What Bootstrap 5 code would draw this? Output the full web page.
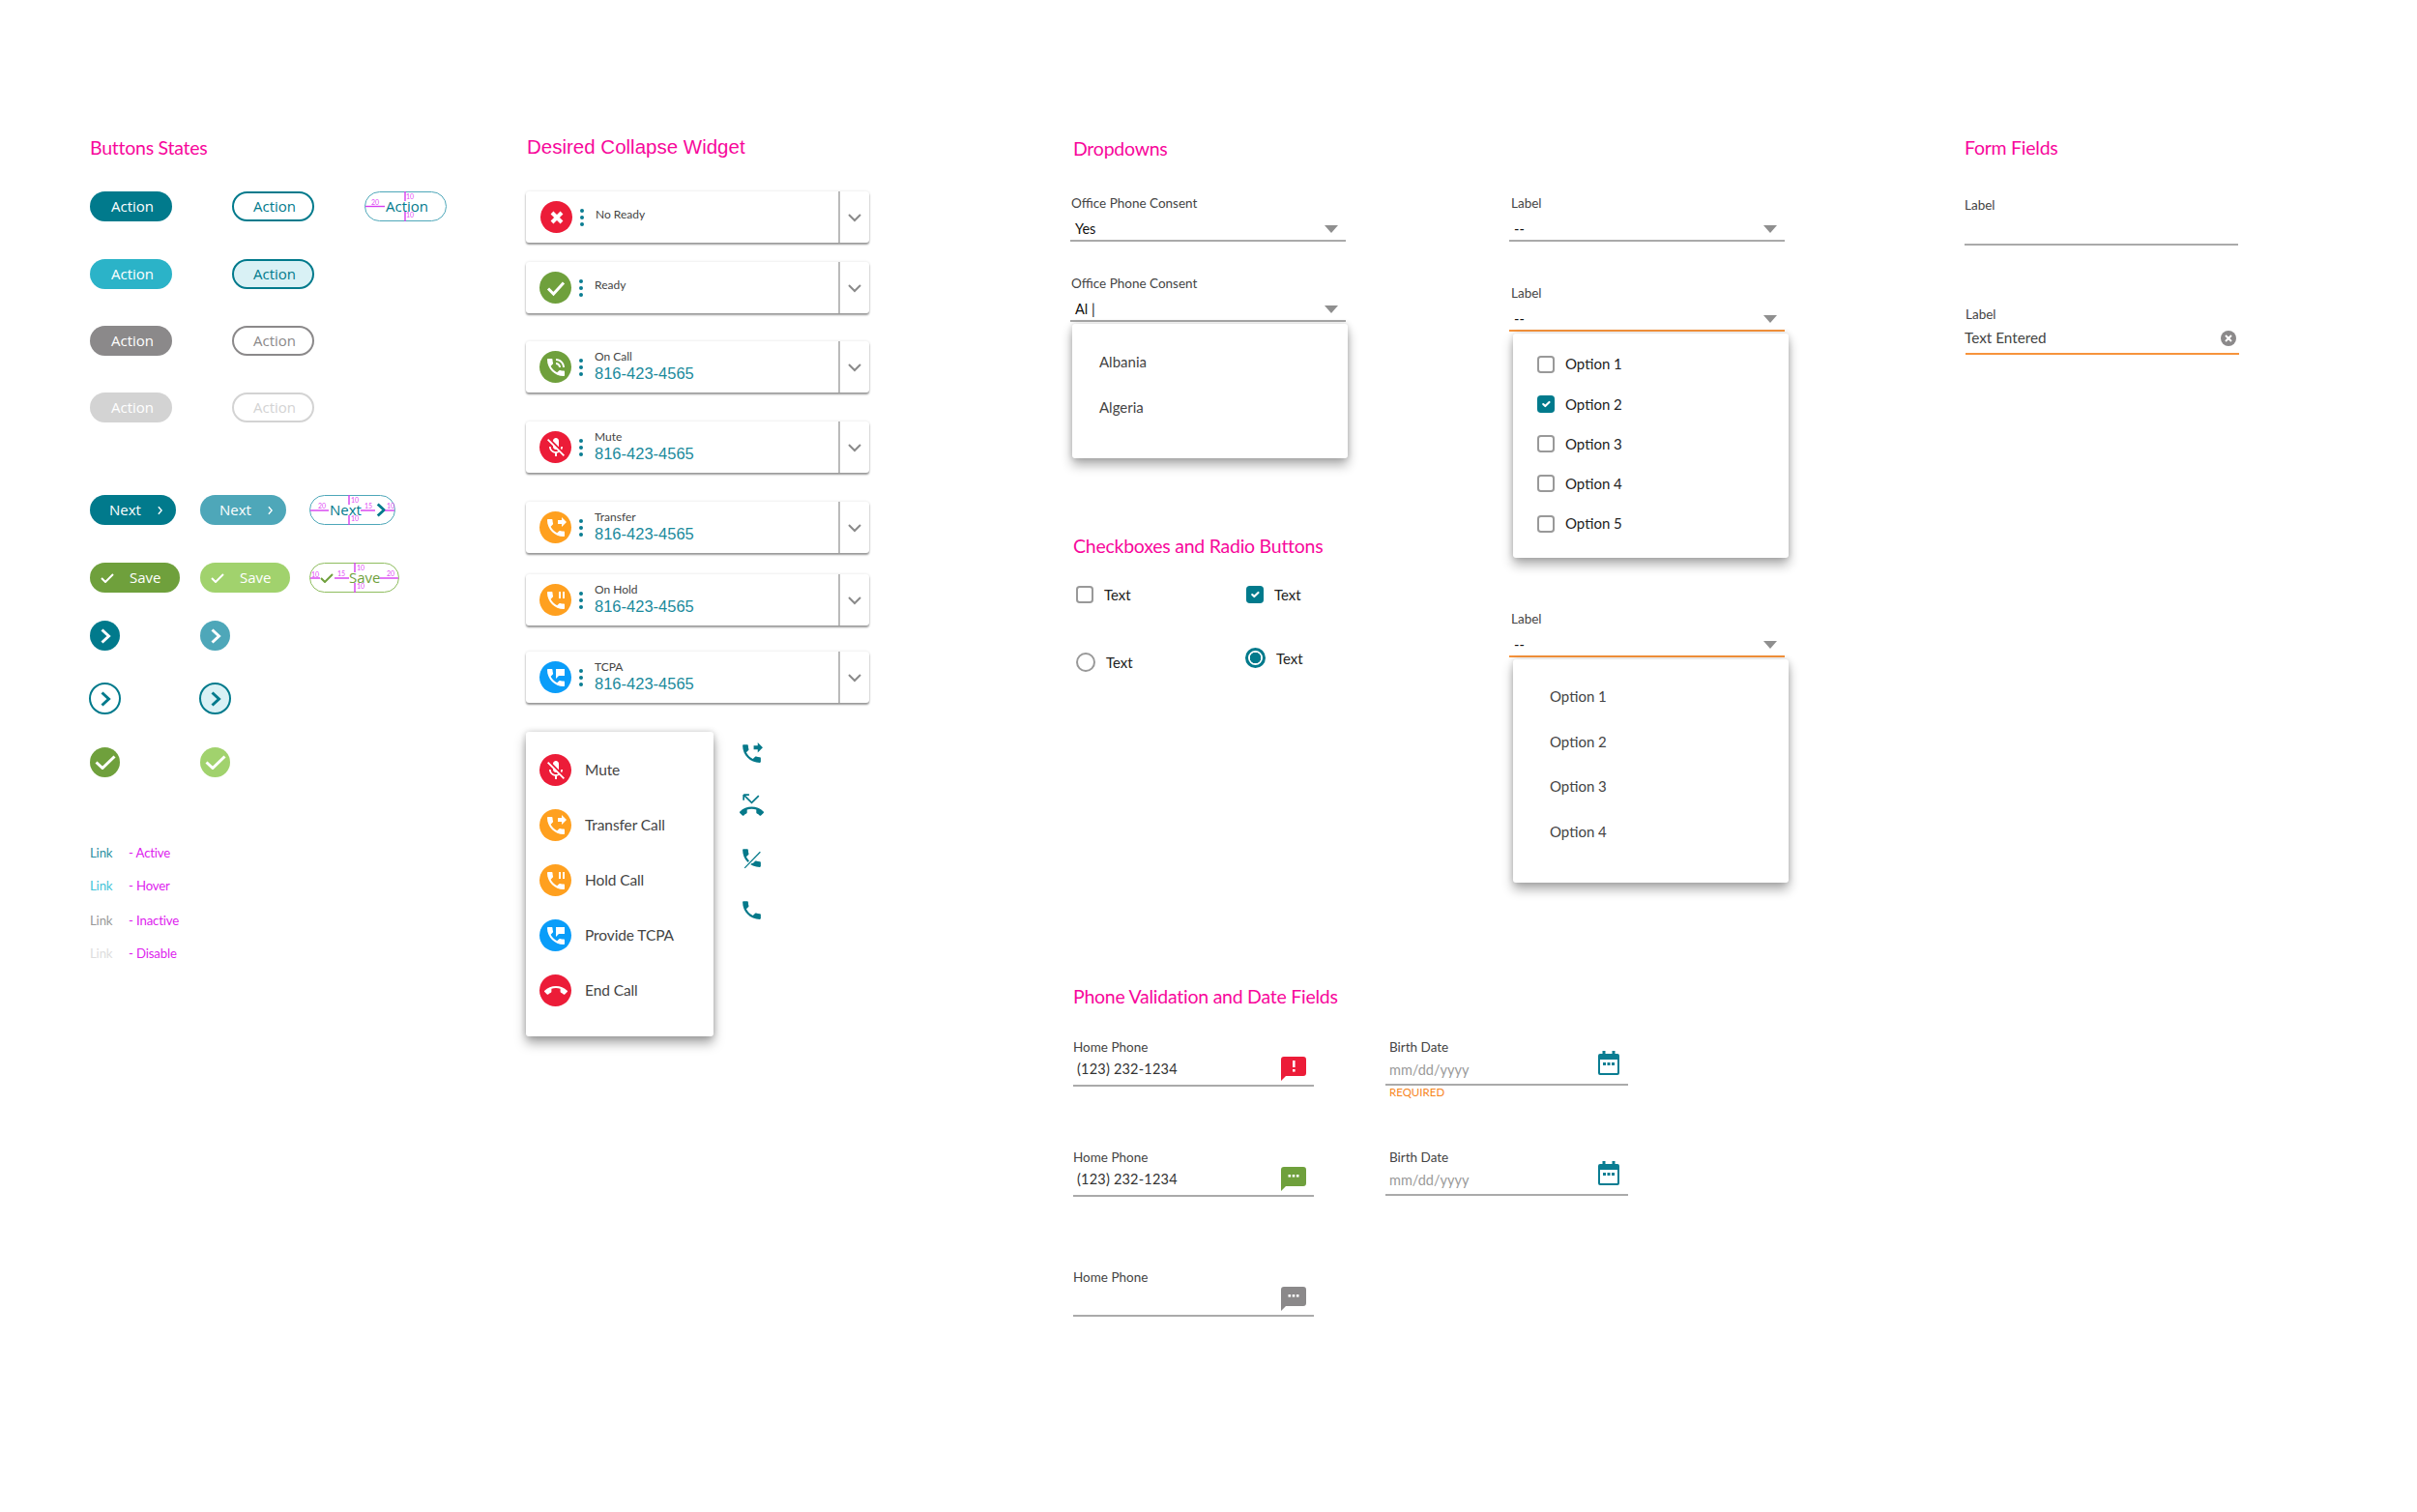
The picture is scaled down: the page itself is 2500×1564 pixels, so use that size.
<!DOCTYPE html>
<html lang="en">
<head>
<meta charset="utf-8">
<title>UI Kit</title>
<link rel="stylesheet" href="https://cdn.jsdelivr.net/npm/bootstrap@5.3.0/dist/css/bootstrap.min.css">
<style>
:root{--teal:#017a8c;--teal2:#4ea7b9;--hov:#2bb3c8;--pale:#d9f1f5;--grn:#6fa03c;--grn2:#a1d26d;--gry:#8b898a;--dis:#d3d3d3;--red:#ec1c38;--org:#ffa01f;--blu:#0a9df9;--focus:#f7943c;--ink:#444}
body{background:#fff;font-family:"Lato","Liberation Sans",sans-serif;color:var(--ink)}
.sheet{padding:139px 0 0 93px}
.c1{width:451px}.c2{width:563px}.c3{width:454px}.c4{width:471px}.c34{width:925px}
.ttl{height:28px;line-height:28px;font-size:19.5px;color:#f7079b;letter-spacing:-.25px;margin:0;font-weight:400}
.ttl-arial{font-family:"Liberation Sans",sans-serif;font-size:20.5px;letter-spacing:0}

/* buttons */
.g-act{display:grid;grid-template-columns:147px 137px 85px}
.g-next{display:grid;grid-template-columns:114px 113px 93px}
.pb{position:relative;display:flex;align-items:center;height:31px;width:85px;padding:0 0 0 20px;border:2px solid transparent;border-radius:50rem;font:500 15px/1 "Open Sans","Liberation Sans",sans-serif;color:#fff;text-align:left}
.pb-teal{background:var(--teal);color:#fff}
.pb-hov{background:var(--hov);color:#fff}
.pb-gry{background:var(--gry);color:#fff}
.pb-dis{background:var(--dis);color:#fff}
.pb-l{background:#fff;border-color:var(--teal);color:var(--teal)}
.pb-lh{background:var(--pale);border-color:var(--teal);color:var(--teal)}
.pb-lg{background:#fff;border-color:var(--gry);color:var(--gry)}
.pb-ld{background:#fff;border-color:var(--dis);color:var(--dis)}
.pb-spec{border-width:1px;padding-left:21px;background:#fff;border-color:var(--teal2);color:var(--teal)}
.pb-spec-g{border-color:#8fbd5f;color:var(--grn)}
.pb-next{width:89px;padding-left:18px}
.pb-next.pb-spec{padding-left:20px}
.pb-next .nx-s{margin-left:17px}
.pb-save{width:93px;padding-left:9px}
.pb-teal2{background:var(--teal2);color:#fff}
.pb-grn{background:var(--grn);color:#fff}
.pb-grn2{background:var(--grn2);color:#fff}
.nx-s{width:5px;height:10px;flex:none}
.nx-b{width:10px;height:15px;margin-left:15px;flex:none}
.ck-s{width:14px;height:10px;margin-right:16px;flex:none}
.pb-save.pb-spec{padding-left:10px}
.spec-svg{position:absolute;left:-1px;top:-1px;pointer-events:none}
.spec-svg line{stroke:#d63df0;stroke-width:1.4}
.spec-svg text{font:7px "Lato",sans-serif;fill:#e24cf5;text-anchor:middle}
.g-circ{display:grid;grid-template-columns:114px 33px}
.cb{width:31px;height:31px;display:flex;align-items:center;justify-content:center;border-radius:50%;padding:0;color:#fff;border:0}
.cb-o{width:33px;height:33px;margin-left:-1px;border:2px solid var(--teal);color:var(--teal);background:#fff}
.cb-oh{background:var(--pale)}
.cb-teal{background:var(--teal)}.cb-teal2{background:var(--teal2)}.cb-grn{background:var(--grn)}.cb-grn2{background:var(--grn2)}
.cb svg.cv{width:12px;height:16px}
.cb svg.ckb{width:22px;height:15px}
.lnk{display:flex;height:20px;line-height:20px;font-size:13.2px;letter-spacing:-.15px}
.lnk a{width:40px;text-decoration:none}
.lnk span{color:#dd22ee}
.lk-a{color:#2a8fa1}.lk-h{color:#45c4d8}.lk-i{color:#999}.lk-d{color:#ddd}

/* call widgets */
.call{flex-direction:row;align-items:stretch;width:355px;height:53px;border:0;border-radius:3px;box-shadow:0 2px 2px rgba(0,0,0,.38),0 0 3px rgba(0,0,0,.12)}
.call-m{flex:1;display:flex;align-items:center;padding-left:14px}
.call-x{width:32px;border-left:2px solid #bbb;display:flex;align-items:center;justify-content:center;padding-top:2px}
.call-x svg{width:14px;height:9px}
.st{width:33px;height:33px;flex:none;border-radius:50%;display:flex;align-items:center;justify-content:center;color:#fff}
.st svg{width:24px;height:24px;fill:currentColor}
.st-r{background:var(--red)}.st-g{background:var(--grn)}.st-o{background:var(--org)}.st-b{background:var(--blu)}
.dots{width:4px;height:18px;margin:0 12px 0 8px;flex:none}
.call-t{display:flex;flex-direction:column;margin-bottom:2px}
.call-l{font-size:12px;line-height:15px;color:var(--ink)}
.call-n{font:16.5px/20px "Liberation Sans",sans-serif;color:#1a8a9c}
.call-up{margin-bottom:6px}
.below{display:flex;align-items:flex-start}
.mnu{width:194px;height:315px;margin:0;padding:23px 0 0 14px;border:0;border-radius:3px;list-style:none;box-shadow:0 7px 12px rgba(0,0,0,.35),0 0 6px rgba(0,0,0,.18);display:flex;flex-direction:column;gap:24px;background:#fff}
.mnu li{display:flex;align-items:center;gap:14px;font-size:15.5px;color:var(--ink);letter-spacing:-.1px}
.side{margin:10px 0 0 27px;display:flex;flex-direction:column;gap:29px;color:#05798a}
.side svg{width:25px;height:25px;display:block;fill:currentColor}

/* fields */
.lab{height:18px;line-height:18px;font-size:13.5px;color:var(--ink);display:block;margin:0}
.fld{display:flex;align-items:center;justify-content:space-between;height:31px;padding:7px 8px 0 5px;border-bottom:2px solid #aaa;font-size:14.5px;color:#111;width:285px}
.fld-f{border-bottom-color:var(--focus)}
.tri{width:0;height:0;border:7px solid transparent;border-top:8px solid #8f8f8f;border-bottom:0;flex:none}
.lab-i{padding-left:1px}
.dd{position:static;display:block;width:285px;margin:0;padding:16px 0 29px;border:0;border-radius:3px;box-shadow:0 7px 12px rgba(0,0,0,.32),0 0 6px rgba(0,0,0,.16);font-size:15px;background:#fff}
.dd-c{height:139px}
.dd-it{display:block;height:47px;line-height:47px;padding:0 0 0 28px;color:var(--ink);font-size:15px;background:transparent}
.dd-o{padding:15px 0 29px;height:231px}
.dd-o .dd-it{height:46.67px;line-height:46.67px;padding-left:38px}
.dd-k{height:232px;padding:11px 0 14px 25px}
.dd-k .ck-l{height:41.25px}
.ck-l{display:flex;align-items:center;gap:11px;font-size:15px;color:#222}
.fci{width:18px;height:18px;margin:0;flex:none;border:2px solid #999;border-radius:2px;background-color:#fff}
.fci:checked{background-color:var(--teal);border-color:var(--teal)}
.fci[type=radio]{width:20px;height:20px;border-radius:50%}
.fci[type=radio]:checked{width:21px;height:21px;background-color:#fff;background-image:radial-gradient(circle,var(--teal) 0 5.5px,#fff 6px);border:3px solid var(--teal)}
.g-chk{display:grid;grid-template-columns:176px 100px;padding-left:6px}
.rad-up{margin-top:-8px;margin-left:-1px}
.pv-row{display:flex;align-items:flex-start}
.pv-a{width:323px}
.pv-b{width:253px}
.pv-f{display:flex;align-items:center;justify-content:space-between;height:32px;width:249px;padding:0 8px 3px 4px;border-bottom:2px solid #aaa;color:#333;font-size:14.5px;letter-spacing:.2px}
.pv-f svg{width:26px;height:25px;flex:none}
.pv-d{display:flex;align-items:center;justify-content:space-between;width:251px;height:31px;padding:0 9px 0 4px;border-bottom:2px solid #aaa;color:#9a9a9a;font-size:14.5px}
.pv-d svg{width:22px;height:25px;flex:none;margin-top:-15px}
.req{font-size:11.5px;line-height:12px;color:#f7861e;padding:1px 0 0 4px;margin:0}
.lab-d{padding-left:4px}
.ff{width:283px;height:33px;border-bottom:2px solid #aaa;padding:0 3px 0 0;display:flex;align-items:center;justify-content:space-between;font-size:15.3px;color:var(--ink)}
.ff svg{width:16px;height:16px}
.ff-f{border-bottom-color:var(--focus);margin-left:1px}
.ff-f span{margin-left:-1px}

/* flow spacing */
.t-1{margin-top:-1px}.t1{margin-top:1px}.t2{margin-top:2px}.t14{margin-top:14px}.t16{margin-top:16px}.t20{margin-top:20px}.t22{margin-top:22px}.t25{margin-top:25px}.t27{margin-top:27px}.t29{margin-top:29px}.t30{margin-top:30px}.t31{margin-top:31px}.t32{margin-top:32px}.t33{margin-top:33px}.t34{margin-top:34px}.t36{margin-top:36px}.t38{margin-top:38px}.t39{margin-top:39px}.t44{margin-top:44px}.t47{margin-top:47px}.t52{margin-top:52px}.t54{margin-top:54px}.t62{margin-top:62px}.t68{margin-top:68px}.t74{margin-top:74px}.t75{margin-top:75px}.t77{margin-top:77px}.t104{margin-top:104px}
.x1{margin-left:1px}.x2{margin-left:2px}.x3{margin-left:3px}.x4{margin-left:4px}
</style>
</head>
<body>
<svg class="d-none" xmlns="http://www.w3.org/2000/svg">
  <symbol id="i-call" viewBox="0 0 24 24"><path d="M6.62 10.79c1.44 2.83 3.76 5.14 6.59 6.59l2.2-2.2c.27-.27.67-.36 1.02-.24 1.12.37 2.33.57 3.57.57.55 0 1 .45 1 1V20c0 .55-.45 1-1 1-9.39 0-17-7.61-17-17 0-.55.45-1 1-1h3.5c.55 0 1 .45 1 1 0 1.25.2 2.45.57 3.57.11.35.03.74-.25 1.02l-2.2 2.2z"/></symbol>
  <symbol id="i-talk" viewBox="0 0 24 24"><path d="M20 15.5c-1.25 0-2.45-.2-3.57-.57-.35-.11-.74-.03-1.02.24l-2.2 2.2c-2.83-1.44-5.15-3.75-6.59-6.59l2.2-2.21c.28-.26.36-.65.25-1C8.7 6.45 8.5 5.25 8.5 4c0-.55-.45-1-1-1H4c-.55 0-1 .45-1 1 0 9.39 7.61 17 17 17 .55 0 1-.45 1-1v-3.5c0-.55-.45-1-1-1zM19 12h2c0-4.97-4.03-9-9-9v2c3.87 0 7 3.13 7 7zm-4 0h2c0-2.76-2.24-5-5-5v2c1.66 0 3 1.34 3 3z"/></symbol>
  <symbol id="i-fwd" viewBox="0 0 24 24"><path d="M18 11l5-5-5-5v3h-4v4h4v3zm2 4.5c-1.25 0-2.45-.2-3.57-.57-.35-.11-.74-.03-1.02.24l-2.2 2.2c-2.83-1.44-5.15-3.75-6.59-6.59l2.2-2.21c.28-.26.36-.65.25-1C8.7 6.45 8.5 5.25 8.5 4c0-.55-.45-1-1-1H4c-.55 0-1 .45-1 1 0 9.39 7.61 17 17 17 .55 0 1-.45 1-1v-3.5c0-.55-.45-1-1-1z"/></symbol>
  <symbol id="i-hold" viewBox="0 0 24 24"><path d="M17 3h-2v7h2V3zm3 12.5c-1.25 0-2.45-.2-3.57-.57-.35-.11-.74-.03-1.02.24l-2.2 2.2c-2.83-1.44-5.15-3.75-6.59-6.59l2.2-2.21c.28-.26.36-.65.25-1C8.7 6.45 8.5 5.25 8.5 4c0-.55-.45-1-1-1H4c-.55 0-1 .45-1 1 0 9.39 7.61 17 17 17 .55 0 1-.45 1-1v-3.5c0-.55-.45-1-1-1zM19 3v7h2V3h-2z"/></symbol>
  <symbol id="i-tcpa" viewBox="0 0 24 24"><path d="M20 15.5c-1.25 0-2.45-.2-3.57-.57-.35-.11-.74-.03-1.02.24l-2.2 2.2c-2.83-1.44-5.15-3.75-6.59-6.59l2.2-2.21c.28-.26.36-.65.25-1C8.7 6.45 8.5 5.25 8.5 4c0-.55-.45-1-1-1H4c-.55 0-1 .45-1 1 0 9.39 7.61 17 17 17 .55 0 1-.45 1-1v-3.5c0-.55-.45-1-1-1zM12 3h9v7h-6l-3 3z"/></symbol>
  <symbol id="i-mute" viewBox="0 0 24 24"><path d="M19 11h-1.7c0 .74-.16 1.43-.43 2.05l1.23 1.23c.56-.98.9-2.09.9-3.28zm-4.02.17c0-.06.02-.11.02-.17V5c0-1.66-1.34-3-3-3S9 3.34 9 5v.18l5.98 5.99zM4.27 3L3 4.27l6.01 6.01V11c0 1.66 1.33 3 2.99 3 .22 0 .44-.03.65-.08l1.66 1.66c-.71.33-1.5.52-2.31.52-2.76 0-5.3-2.1-5.3-5.1H5c0 3.41 2.72 6.23 6 6.72V21h2v-3.28c.91-.13 1.77-.45 2.54-.9L19.73 21 21 19.73 4.27 3z"/></symbol>
  <symbol id="i-end" viewBox="0 0 24 24"><path d="M12 9c-1.6 0-3.15.25-4.6.72v3.1c0 .39-.23.74-.56.9-.98.49-1.87 1.12-2.66 1.85-.18.18-.43.28-.7.28-.28 0-.53-.11-.71-.29L.29 13.08c-.18-.17-.29-.42-.29-.7 0-.28.11-.53.29-.71C3.34 8.78 7.46 7 12 7s8.66 1.78 11.71 4.67c.18.18.29.43.29.71 0 .28-.11.53-.29.71l-2.48 2.48c-.18.18-.43.29-.71.29-.27 0-.52-.11-.7-.28-.79-.74-1.69-1.36-2.67-1.85-.33-.16-.56-.5-.56-.9v-3.1C15.15 9.25 13.6 9 12 9z"/></symbol>
  <symbol id="i-cv" viewBox="0 0 10 16"><path d="M1.500 1.500l7 6.500-7 6.500" fill="none" stroke="currentColor" stroke-width="3"/></symbol>
  <symbol id="i-cvs" viewBox="0 0 6 11"><path d="M1 1l4 4.500-4 4.500" fill="none" stroke="currentColor" stroke-width="1.600"/></symbol>
  <symbol id="i-ck" viewBox="0 0 14 10"><path d="M1 5l4 4 8-8" fill="none" stroke="currentColor" stroke-width="2"/></symbol>
  <symbol id="i-ckb" viewBox="0 0 22 15"><path d="M1.500 7.500L8 13.500 20.500 1.500" fill="none" stroke="currentColor" stroke-width="3"/></symbol>
  <symbol id="i-dn" viewBox="0 0 14 9"><path d="M1 1l6 6 6-6" fill="none" stroke="#8a8a8a" stroke-width="2"/></symbol>
  <symbol id="i-dots" viewBox="0 0 4 18"><circle cx="2" cy="2" r="2" fill="#0a7d92"/><circle cx="2" cy="9" r="2" fill="#0a7d92"/><circle cx="2" cy="16" r="2" fill="#0a7d92"/></symbol>
  <symbol id="i-bub" viewBox="0 0 26 25"><path d="M3 0h20a3 3 0 0 1 3 3v14a3 3 0 0 1-3 3H5l-5 5V3a3 3 0 0 1 3-3z"/></symbol>
  <symbol id="i-cal" viewBox="0 0 22 25"><path fill="#0a7d92" d="M4.500 0h3v3h7V0h3v3H20a2 2 0 0 1 2 2v18a2 2 0 0 1-2 2H2a2 2 0 0 1-2-2V5a2 2 0 0 1 2-2h2.500zM2 9v13.500c0 .3.2.5.500.5h17c.3 0 .5-.2.500-.5V9z"/><rect x="5" y="12" width="3" height="3" fill="#0a7d92"/><rect x="9.500" y="12" width="3" height="3" fill="#0a7d92"/><rect x="14" y="12" width="3" height="3" fill="#0a7d92"/></symbol>
</svg>

<main class="sheet d-flex align-items-start">

  <section class="c1">
    <h2 class="ttl">Buttons States</h2>
    <div class="g-act t31">
      <button class="btn pb pb-teal">Action</button>
      <button class="btn pb pb-l">Action</button>
      <button class="btn pb pb-spec">Action
        <svg class="spec-svg" width="85" height="31"><line x1="1" y1="15.500" x2="21" y2="15.500"/><line x1="42" y1="0" x2="42" y2="10"/><line x1="42" y1="21" x2="42" y2="31"/><text x="11" y="14">20</text><text x="47" y="7.500">10</text><text x="47" y="27">10</text></svg>
      </button>
    </div>
    <div class="g-act t39">
      <button class="btn pb pb-hov">Action</button>
      <button class="btn pb pb-lh">Action</button>
    </div>
    <div class="g-act t38">
      <button class="btn pb pb-gry">Action</button>
      <button class="btn pb pb-lg">Action</button>
    </div>
    <div class="g-act t38">
      <button class="btn pb pb-dis">Action</button>
      <button class="btn pb pb-ld">Action</button>
    </div>

    <div class="g-next t75">
      <button class="btn pb pb-next pb-teal">Next <svg class="nx-s"><use href="#i-cvs"/></svg></button>
      <button class="btn pb pb-next pb-teal2">Next <svg class="nx-s"><use href="#i-cvs"/></svg></button>
      <button class="btn pb pb-next pb-spec">Next<svg class="nx-b"><use href="#i-cv"/></svg>
        <svg class="spec-svg" width="89" height="31"><line x1="1" y1="16" x2="20" y2="16"/><line x1="53" y1="16" x2="68" y2="16"/><line x1="78" y1="16" x2="88" y2="16"/><line x1="41" y1="0" x2="41" y2="10"/><line x1="41" y1="21" x2="41" y2="31"/><text x="13" y="14">20</text><text x="61" y="14">15</text><text x="84" y="14">10</text><text x="47" y="7.500">10</text><text x="47" y="27">10</text></svg>
      </button>
    </div>
    <div class="g-next t39">
      <button class="btn pb pb-save pb-grn"><svg class="ck-s"><use href="#i-ck"/></svg>Save</button>
      <button class="btn pb pb-save pb-grn2"><svg class="ck-s"><use href="#i-ck"/></svg>Save</button>
      <button class="btn pb pb-save pb-spec pb-spec-g"><svg class="ck-s"><use href="#i-ck"/></svg>Save
        <svg class="spec-svg" width="93" height="31"><line x1="1" y1="16" x2="11" y2="16"/><line x1="26" y1="16" x2="41" y2="16"/><line x1="73" y1="16" x2="92" y2="16"/><line x1="47" y1="0" x2="47" y2="10"/><line x1="47" y1="21" x2="47" y2="31"/><text x="6" y="15">10</text><text x="33" y="14">15</text><text x="84" y="14">20</text><text x="53" y="7.500">10</text><text x="53" y="27">10</text></svg>
      </button>
    </div>

    <div class="g-circ t29">
      <button class="btn cb cb-teal"><svg class="cv"><use href="#i-cv"/></svg></button>
      <button class="btn cb cb-teal2"><svg class="cv"><use href="#i-cv"/></svg></button>
    </div>
    <div class="g-circ t33">
      <button class="btn cb cb-o"><svg class="cv"><use href="#i-cv"/></svg></button>
      <button class="btn cb cb-o cb-oh"><svg class="cv"><use href="#i-cv"/></svg></button>
    </div>
    <div class="g-circ t34">
      <button class="btn cb cb-grn"><svg class="ckb"><use href="#i-ckb"/></svg></button>
      <button class="btn cb cb-grn2"><svg class="ckb"><use href="#i-ckb"/></svg></button>
    </div>

    <div class="lnk t68"><a class="lk-a" href="#">Link</a><span>- Active</span></div>
    <div class="lnk t14"><a class="lk-h" href="#">Link</a><span>- Hover</span></div>
    <div class="lnk t16"><a class="lk-i" href="#">Link</a><span>- Inactive</span></div>
    <div class="lnk t14"><a class="lk-d" href="#">Link</a><span>- Disable</span></div>
  </section>

  <section class="c2">
    <h2 class="ttl ttl-arial t-1 x1">Desired Collapse Widget</h2>
    <div class="card call t32">
      <div class="call-m"><span class="st st-r x1"><svg viewBox="0 0 24 24"><path d="M7 7l10 10M17 7L7 17" fill="none" stroke="#fff" stroke-width="4"/></svg></span><svg class="dots"><use href="#i-dots"/></svg><div class="call-t call-up"><span class="call-l">No Ready</span></div></div>
      <div class="call-x"><svg><use href="#i-dn"/></svg></div>
    </div>
    <div class="card call t20">
      <div class="call-m"><span class="st st-g"><svg viewBox="0 0 24 24"><path d="M4 12.500l5.500 5.500L20 6.500" fill="none" stroke="#fff" stroke-width="3"/></svg></span><svg class="dots"><use href="#i-dots"/></svg><div class="call-t call-up"><span class="call-l">Ready</span></div></div>
      <div class="call-x"><svg><use href="#i-dn"/></svg></div>
    </div>
    <div class="card call t29">
      <div class="call-m"><span class="st st-g"><svg><use href="#i-talk"/></svg></span><svg class="dots"><use href="#i-dots"/></svg><div class="call-t"><span class="call-l">On Call</span><span class="call-n">816-423-4565</span></div></div>
      <div class="call-x"><svg><use href="#i-dn"/></svg></div>
    </div>
    <div class="card call t30">
      <div class="call-m"><span class="st st-r"><svg><use href="#i-mute"/></svg></span><svg class="dots"><use href="#i-dots"/></svg><div class="call-t"><span class="call-l">Mute</span><span class="call-n">816-423-4565</span></div></div>
      <div class="call-x"><svg><use href="#i-dn"/></svg></div>
    </div>
    <div class="card call t30">
      <div class="call-m"><span class="st st-o"><svg><use href="#i-fwd"/></svg></span><svg class="dots"><use href="#i-dots"/></svg><div class="call-t"><span class="call-l">Transfer</span><span class="call-n">816-423-4565</span></div></div>
      <div class="call-x"><svg><use href="#i-dn"/></svg></div>
    </div>
    <div class="card call t22">
      <div class="call-m"><span class="st st-o"><svg><use href="#i-hold"/></svg></span><svg class="dots"><use href="#i-dots"/></svg><div class="call-t"><span class="call-l">On Hold</span><span class="call-n">816-423-4565</span></div></div>
      <div class="call-x"><svg><use href="#i-dn"/></svg></div>
    </div>
    <div class="card call t27">
      <div class="call-m"><span class="st st-b"><svg><use href="#i-tcpa"/></svg></span><svg class="dots"><use href="#i-dots"/></svg><div class="call-t"><span class="call-l">TCPA</span><span class="call-n">816-423-4565</span></div></div>
      <div class="call-x"><svg><use href="#i-dn"/></svg></div>
    </div>

    <div class="below t30">
      <ul class="mnu card">
        <li><span class="st st-r"><svg><use href="#i-mute"/></svg></span>Mute</li>
        <li><span class="st st-o"><svg><use href="#i-fwd"/></svg></span>Transfer Call</li>
        <li><span class="st st-o"><svg><use href="#i-hold"/></svg></span>Hold Call</li>
        <li><span class="st st-b"><svg><use href="#i-tcpa"/></svg></span>Provide TCPA</li>
        <li><span class="st st-r"><svg><use href="#i-end"/></svg></span>End Call</li>
      </ul>
      <div class="side">
        <svg><use href="#i-fwd"/></svg>
        <svg viewBox="0 0 24 24"><g transform="translate(0 6)"><use href="#i-end" width="24" height="24"/></g><path d="M4 1v5.500M4 1h5.500M4.500 1.500L12 9l7-7" fill="none" stroke="currentColor" stroke-width="1.600"/></svg>
        <svg viewBox="0 0 24 24"><use href="#i-call" width="24" height="24"/><path d="M20.500 6L5 22" stroke="#fff" stroke-width="3.500"/><path d="M20.500 6L5 22" stroke="currentColor" stroke-width="1.200"/></svg>
        <svg><use href="#i-call"/></svg>
      </div>
    </div>
  </section>

  <div class="c34">
    <div class="d-flex align-items-start">
      <section class="c3">
        <h2 class="ttl t1 x3">Dropdowns</h2>
        <label class="lab t33 lab-i">Office Phone Consent</label>
        <div class="fld"><span>Yes</span><i class="tri"></i></div>
        <label class="lab t34 lab-i">Office Phone Consent</label>
        <div class="fld"><span>Al |</span><i class="tri"></i></div>
        <div class="dropdown-menu dd dd-c t2 x2">
          <a class="dropdown-item dd-it" href="#">Albania</a>
          <a class="dropdown-item dd-it" href="#">Algeria</a>
        </div>
        <h2 class="ttl t77 x3">Checkboxes and Radio Buttons</h2>
        <div class="g-chk t25">
          <label class="ck-l"><input class="form-check-input fci" type="checkbox">Text</label>
          <label class="ck-l"><input class="form-check-input fci" type="checkbox" checked>Text</label>
        </div>
        <div class="g-chk t47">
          <label class="ck-l"><input class="form-check-input fci" type="radio" name="r1">Text</label>
          <label class="ck-l rad-up"><input class="form-check-input fci" type="radio" name="r2" checked>Text</label>
        </div>
      </section>
      <section class="c4">
        <label class="lab t62 x2">Label</label>
        <div class="fld"><span>--</span><i class="tri"></i></div>
        <label class="lab t44 x2">Label</label>
        <div class="fld fld-f"><span>--</span><i class="tri"></i></div>
        <div class="dropdown-menu dd dd-k t2 x4">
          <label class="ck-l"><input class="form-check-input fci" type="checkbox">Option 1</label>
          <label class="ck-l"><input class="form-check-input fci" type="checkbox" checked>Option 2</label>
          <label class="ck-l"><input class="form-check-input fci" type="checkbox">Option 3</label>
          <label class="ck-l"><input class="form-check-input fci" type="checkbox">Option 4</label>
          <label class="ck-l"><input class="form-check-input fci" type="checkbox">Option 5</label>
        </div>
        <label class="lab t54 x2">Label</label>
        <div class="fld fld-f"><span>--</span><i class="tri"></i></div>
        <div class="dropdown-menu dd dd-o t2 x4">
          <a class="dropdown-item dd-it" href="#">Option 1</a>
          <a class="dropdown-item dd-it" href="#">Option 2</a>
          <a class="dropdown-item dd-it" href="#">Option 3</a>
          <a class="dropdown-item dd-it" href="#">Option 4</a>
        </div>
      </section>
    </div>

    <section class="t104 x3">
      <h2 class="ttl">Phone Validation and Date Fields</h2>
      <div class="pv-row t29">
        <div class="pv-a">
          <label class="lab">Home Phone</label>
          <div class="pv-f"><span>(123) 232-1234</span><svg fill="#ec1c38"><use href="#i-bub"/><rect x="12" y="4" width="2.600" height="7" fill="#fff"/><rect x="12" y="13" width="2.600" height="2.600" fill="#fff"/></svg></div>
        </div>
        <div class="pv-b">
          <label class="lab lab-d">Birth Date</label>
          <div class="pv-d"><span>mm/dd/yyyy</span><svg><use href="#i-cal"/></svg></div>
          <p class="req">REQUIRED</p>
        </div>
      </div>
      <div class="pv-row t52">
        <div class="pv-a">
          <label class="lab">Home Phone</label>
          <div class="pv-f"><span>(123) 232-1234</span><svg fill="#6fa03c"><use href="#i-bub"/><rect x="7.500" y="8" width="2.600" height="2.600" fill="#fff"/><rect x="11.700" y="8" width="2.600" height="2.600" fill="#fff"/><rect x="15.900" y="8" width="2.600" height="2.600" fill="#fff"/></svg></div>
        </div>
        <div class="pv-b">
          <label class="lab lab-d">Birth Date</label>
          <div class="pv-d"><span>mm/dd/yyyy</span><svg><use href="#i-cal"/></svg></div>
        </div>
      </div>
      <div class="pv-row t74">
        <div class="pv-a">
          <label class="lab">Home Phone</label>
          <div class="pv-f"><span></span><svg fill="#8b898a"><use href="#i-bub"/><rect x="7.500" y="8" width="2.600" height="2.600" fill="#fff"/><rect x="11.700" y="8" width="2.600" height="2.600" fill="#fff"/><rect x="15.900" y="8" width="2.600" height="2.600" fill="#fff"/></svg></div>
        </div>
      </div>
    </section>
  </div>

  <section>
    <h2 class="ttl">Form Fields</h2>
    <label class="lab t36">Label</label>
    <div class="ff"></div>
    <label class="lab t62 x1">Label</label>
    <div class="ff ff-f"><span>Text Entered</span><svg viewBox="0 0 16 16"><circle cx="8" cy="8" r="8" fill="#8b898a"/><path d="M5 5l6 6M11 5l-6 6" stroke="#fff" stroke-width="2"/></svg></div>
  </section>

</main>
<script src="https://cdn.jsdelivr.net/npm/bootstrap@5.3.0/dist/js/bootstrap.bundle.min.js"></script>
</body>
</html>
